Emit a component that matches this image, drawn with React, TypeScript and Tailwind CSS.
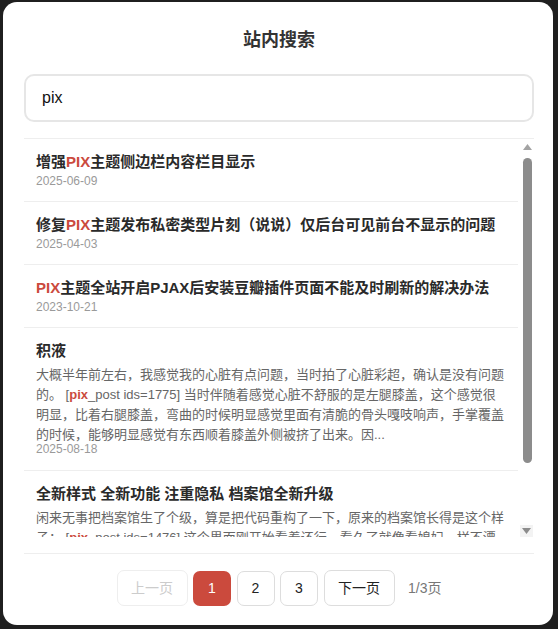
import React from 'react';

type Post = {
  title: React.ReactNode;
  excerpt?: React.ReactNode;
  date: string;
};

// keyword highlight
const Hl = ({ children }: { children: React.ReactNode }) => (
  <span className="text-[#cb4a3d] font-bold">{children}</span>
);

const posts: Post[] = [
  {
    title: (
      <>
        增强<Hl>PIX</Hl>主题侧边栏内容栏目显示
      </>
    ),
    date: '2025-06-09',
  },
  {
    title: (
      <>
        修复<Hl>PIX</Hl>主题发布私密类型片刻（说说）仅后台可见前台不显示的问题
      </>
    ),
    date: '2025-04-03',
  },
  {
    title: (
      <>
        <Hl>PIX</Hl>主题全站开启PJAX后安装豆瓣插件页面不能及时刷新的解决办法
      </>
    ),
    date: '2023-10-21',
  },
  {
    title: '积液',
    excerpt: (
      <>
        大概半年前左右，我感觉我的心脏有点问题，当时拍了心脏彩超，确认是没有问题的。 [<Hl>pix</Hl>_post ids=1775]
        当时伴随着感觉心脏不舒服的是左腿膝盖，这个感觉很明显，比着右腿膝盖，弯曲的时候明显感觉里面有清脆的骨头嘎吱响声，手掌覆盖的时候，能够明显感觉有东西顺着膝盖外侧被挤了出来。因...
      </>
    ),
    date: '2025-08-18',
  },
  {
    title: '全新样式 全新功能 注重隐私 档案馆全新升级',
    excerpt: (
      <>
        闲来无事把档案馆生了个级，算是把代码重构了一下，原来的档案馆长得是这个样子： [<Hl>pix</Hl>_post ids=1476]
        这个界面刚开始看着还行，看久了就像看媳妇一样不漂亮了，于是...
      </>
    ),
    date: '2024-11-02',
  },
];

const PostItem = ({ post }: { post: Post }) => (
  <div className={post.excerpt ? 'px-3 pt-3 pb-3 border-b border-[#eeeeee]' : 'px-3 pt-3 pb-[11px] border-b border-[#eeeeee]'}>
    <div className="text-[15px] leading-[22px] font-bold text-[#2a2a2a]">{post.title}</div>
    {post.excerpt && (
      <p className="mt-[3px] text-[13px] leading-[20px] text-[#666666]">{post.excerpt}</p>
    )}
    <div
      className={
        post.excerpt
          ? '-mt-[4px] text-[12px] leading-[17px] text-[#9a9a9a]'
          : 'text-[12px] leading-[17px] text-[#9a9a9a]'
      }
    >
      {post.date}
    </div>
  </div>
);

const ScrollBar = () => (
  <div className="w-4 flex flex-col items-center">
    <svg width="9" height="6" viewBox="0 0 9 6" className="mt-[5px] ml-[2px]">
      <path d="M4.5 0 L9 6 L0 6 Z" fill="#a3a3a3" />
    </svg>
    <div className="mt-[8px] ml-[3px] w-[9px] h-[305px] rounded-full bg-[#8c8c8c]" />
    <div className="flex-1" />
    <div className="w-[13px] h-[12px] ml-[1px] bg-[#f3f3f3] flex items-center justify-center">
      <svg width="9" height="6" viewBox="0 0 9 6">
        <path d="M0 0 L9 0 L4.5 6 Z" fill="#8c8c8c" />
      </svg>
    </div>
  </div>
);

export default function App() {
  return (
    <div
      className="min-h-screen bg-[#1f1f1f] pt-[2px] pl-[3px]"
      style={{ fontFamily: '"Liberation Sans", "Noto Sans CJK SC", sans-serif' }}
    >
      <div className="w-[550px] h-[623px] bg-white rounded-[14px] pl-[21px] pr-[19px] pt-6 flex flex-col">
        <h2 className="text-center text-[18px] leading-7 font-bold text-[#333333]">站内搜索</h2>

        <div className="mt-5 h-12 border-2 border-[#e6e6e6] rounded-[10px] flex items-center pl-4 text-[16px] text-[#111111]">
          pix
        </div>

        <div className="mt-4 h-[399px] border-t border-[#eeeeee] flex">
          <div className="flex-1 overflow-hidden">
            {posts.map((p, i) => (
              <PostItem key={i} post={p} />
            ))}
          </div>
          <ScrollBar />
        </div>

        <div className="mt-4 border-t border-[#eeeeee] pt-4 flex items-center justify-center gap-[5.5px] text-[14px]">
          <button className="h-9 px-[13.5px] border border-[#eeeeee] rounded-[7px] text-[#cccccc]">
            上一页
          </button>
          <button className="w-[38px] h-[35px] rounded-[7px] bg-[#cb4a3d] text-white">1</button>
          <button className="w-[38px] h-[35px] border border-[#dddddd] rounded-[7px] text-[#222222]">2</button>
          <button className="w-[38px] h-[35px] border border-[#dddddd] rounded-[7px] text-[#222222]">3</button>
          <button className="h-9 px-[13.5px] border border-[#dddddd] rounded-[7px] text-[#222222]">
            下一页
          </button>
          <span className="ml-[8px] text-[#777777]">1/3页</span>
        </div>
      </div>
    </div>
  );
}
